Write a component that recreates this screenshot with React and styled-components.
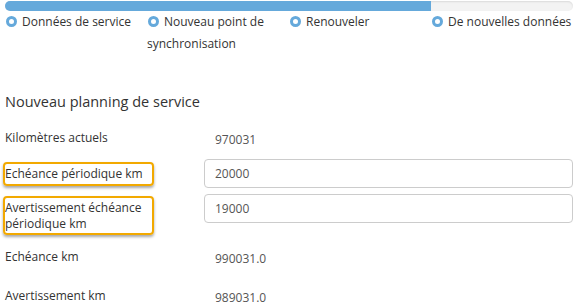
import React from "react";
import styled, { createGlobalStyle } from "styled-components";

const Global = createGlobalStyle`
  html, body { margin: 0; padding: 0; background: #fff; }
  body { font-family: "Open Sans", "Noto Sans", sans-serif; color: #333; }
`;

const Page = styled.div`
  padding: 1px 2px 0 5px;
`;

const Track = styled.div`
  height: 10px;
  border-radius: 5px;
  background: #f3f3f3;
  box-shadow: inset 0 1px 2px rgba(0, 0, 0, 0.1);
  overflow: hidden;
`;

const Fill = styled.div`
  height: 100%;
  background: #65a9db;
`;

const Steps = styled.div`
  display: grid;
  grid-template-columns: repeat(4, 1fr);
  font-size: 12px;
  line-height: 22px;
  color: #333;
`;

const Step = styled.div`
  white-space: ${(p) => (p.$nowrap ? "nowrap" : "normal")};
`;

const Dot = styled.span`
  display: inline-block;
  box-sizing: border-box;
  width: 11px;
  height: 11px;
  border-radius: 50%;
  border: 3.5px solid #65a9db;
  background: #fff;
  margin: 0 5px 0 1px;
  vertical-align: -1px;
`;

const Heading = styled.h3`
  margin: 37px 0 0;
  font-size: 14.5px;
  font-weight: 400;
  line-height: 20px;
  color: #333;
`;

const Form = styled.div`
  margin-top: 16px;
  font-size: 12px;
`;

const Row = styled.div`
  display: flex;
  align-items: flex-start;
  margin-bottom: ${(p) => p.$mb}px;
`;

const Label = styled.div`
  width: 199px;
  flex: none;
  line-height: 20px;
  color: #333;
`;

const Highlight = styled.div`
  box-sizing: border-box;
  width: 151px;
  margin: ${(p) => p.$mt}px 0 0 -2px;
  border: 2px solid #f2a900;
  border-radius: 4px;
  box-shadow: 0 2px 3px rgba(0, 0, 0, 0.35);
  line-height: ${(p) => p.$lh}px;
  padding: ${(p) => p.$pt}px 4px ${(p) => p.$pb}px 0;
`;

const Value = styled.div`
  padding: 2px 0 0 11px;
  line-height: 20px;
  color: #555;
`;

const Input = styled.input`
  flex: 1;
  min-width: 0;
  box-sizing: border-box;
  height: 29px;
  border: 1px solid #ccc;
  border-radius: 4px;
  padding: 0 10px;
  font-family: inherit;
  font-size: 12px;
  color: #555;
  outline: none;
`;

const steps = [
  { text: "Données de service" },
  { text: "Nouveau point de synchronisation" },
  { text: "Renouveler" },
  { text: "De nouvelles données", nowrap: true },
];

export default function App() {
  return (
    <Page>
      <Global />
      <Track>
        <Fill style={{ width: "75%" }} />
      </Track>
      <Steps>
        {steps.map((s) => (
          <Step key={s.text} $nowrap={s.nowrap}>
            <Dot />
            {s.text}
          </Step>
        ))}
      </Steps>
      <Heading>Nouveau planning de service</Heading>
      <Form>
        <Row $mb={9}>
          <Label>Kilomètres actuels</Label>
          <Value>970031</Value>
        </Row>
        <Row $mb={6}>
          <Label>
            <Highlight $mt={3} $lh={20} $pt={0} $pb={0}>Echéance périodique km</Highlight>
          </Label>
          <Input defaultValue="20000" />
        </Row>
        <Row $mb={12}>
          <Label>
            <Highlight $mt={2} $lh={16} $pt={2} $pb={1}>Avertissement échéance périodique km</Highlight>
          </Label>
          <Input defaultValue="19000" />
        </Row>
        <Row $mb={17}>
          <Label>Echéance km</Label>
          <Value>990031.0</Value>
        </Row>
        <Row $mb={0}>
          <Label>Avertissement km</Label>
          <Value>989031.0</Value>
        </Row>
      </Form>
    </Page>
  );
}
